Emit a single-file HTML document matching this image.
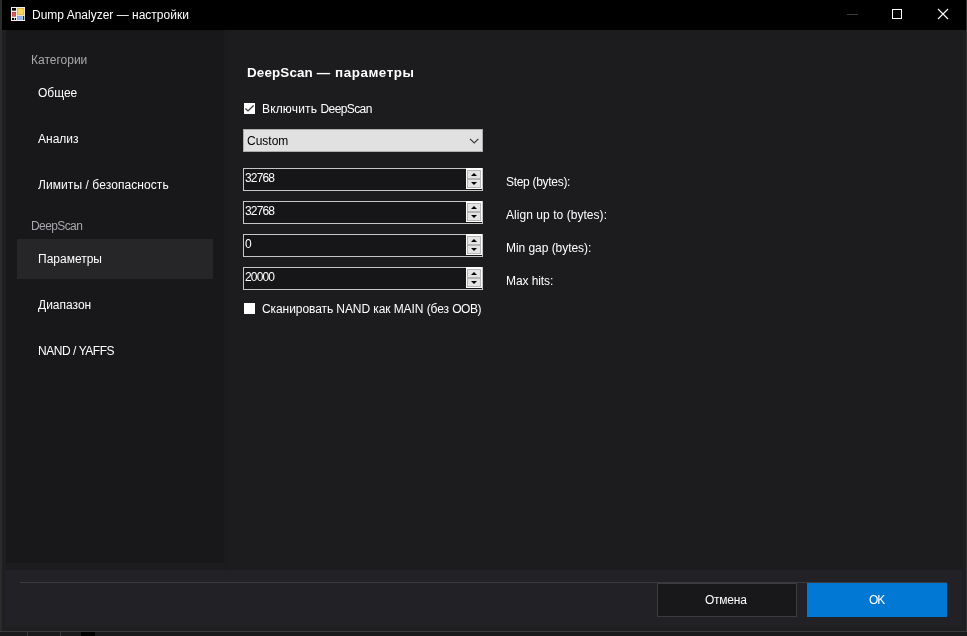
<!DOCTYPE html>
<html lang="ru">
<head>
<meta charset="utf-8">
<title>Dump Analyzer — настройки</title>
<style>
  html, body { margin: 0; padding: 0; }
  body {
    width: 967px; height: 636px; overflow: hidden; position: relative;
    background: #1b1b1d;
    font-family: "Liberation Sans", sans-serif;
    font-size: 12px; color: #ffffff;
  }
  .abs { position: absolute; }
  .t { position: absolute; white-space: nowrap; line-height: 16px; height: 16px; will-change: transform; }
  /* window frame */
  #frame-left { left: 0; top: 0; width: 2px; height: 632px; background: #2b2b2c; }
  #frame-right { left: 966px; top: 0; width: 1px; height: 632px; background: #303030; }
  #titlebar { left: 2px; top: 0; width: 964px; height: 30px; background: #000000; }
  #client { left: 2px; top: 30px; width: 964px; height: 601px; background: #1f1f21; }
  #frame-bottom { left: 0; top: 631px; width: 967px; height: 1px; background: #3a3a3c; }
  #below { left: 0; top: 632px; width: 967px; height: 4px; background: #1a1a1c; }
  #sidebar { left: 6px; top: 30px; width: 218px; height: 533px; background: #18181a; }
  #content { left: 228px; top: 30px; width: 734px; height: 540px; background: #1c1c1e; }
  #gap { left: 224px; top: 30px; width: 4px; height: 540px; background: #1b1b1d; }
  #undersb { left: 6px; top: 563px; width: 218px; height: 7px; background: #1c1c1e; }
  #bottombar { left: 5px; top: 570px; width: 957px; height: 56px; background: #222226; }
  #sep { left: 20px; top: 582px; width: 927px; height: 1px; background: #3a3a3e; }
  .navsel { left: 17px; top: 239px; width: 196px; height: 40px; background: #262629; }
  .hdr { color: #a8a8ac; }
  .btn { position: absolute; top: 583px; width: 140px; height: 34px; box-sizing: border-box; }
  #cancel { left: 657px; background: #18181b; border: 1px solid #3c3c40; }
  #ok { left: 807px; background: #0078d4; }
  .combo { left: 243px; top: 129px; width: 240px; height: 23px; box-sizing: border-box; background: #e1e1e1; border: 1px solid #adadad; }
  .spin { position: absolute; left: 243px; width: 240px; height: 23px; box-sizing: border-box; background: #161618; border: 1px solid #c6c6c6; }
  .spin .ud { position: absolute; right: 0; top: -1px; width: 16px; height: 21px; background: #ffffff; }
  .spin .ud i { position: absolute; left: 1px; width: 14px; height: 9px; box-sizing: border-box; background: #e4e4e4; border: 1px solid #b5b5b5; }
  .spin .ud i.up { top: 2px; }
  .spin .ud i.dn { top: 11px; }
  .spin .ud i:after { content: ""; position: absolute; left: 2.5px; width: 0; height: 0; border-left: 3px solid transparent; border-right: 3px solid transparent; }
  .spin .ud i.up:after { top: 1.5px; border-bottom: 3px solid #000; }
  .spin .ud i.dn:after { top: 2px; border-top: 3px solid #000; }
  .cb { position: absolute; left: 244px; width: 11px; height: 11px; background: #ffffff; }
</style>
</head>
<body>
  <div class="abs" id="client"></div>
  <div class="abs" id="frame-left"></div>
  <div class="abs" id="frame-right"></div>
  <div class="abs" id="titlebar"></div>
  <div class="abs" id="frame-bottom"></div>
  <div class="abs" id="below"></div>
  <div class="abs" style="left:27px;top:632px;width:1px;height:4px;background:#3a3a3c"></div>
  <div class="abs" style="left:60px;top:632px;width:1px;height:4px;background:#3a3a3c"></div>
  <div class="abs" style="left:81px;top:632px;width:14px;height:4px;background:#000"></div>

  <!-- title bar -->
  <svg class="abs" style="left:11px;top:7px" width="14" height="14" viewBox="0 0 14 14">
    <rect x="0" y="0" width="14" height="14" fill="#f2efee"/>
    <rect x="1" y="1" width="4" height="2.6" fill="#000"/>
    <rect x="1" y="5" width="4" height="4.6" fill="#b8403c"/>
    <rect x="1.8" y="5.8" width="2.6" height="3" fill="#e0605c"/>
    <rect x="1" y="11" width="2.2" height="2" fill="#000"/>
    <rect x="4" y="11" width="1" height="2" fill="#000"/>
    <rect x="6" y="1" width="7.2" height="7.2" fill="#d8ae38"/>
    <rect x="6.8" y="1.8" width="5.6" height="5.6" fill="#f6d75c"/>
    <rect x="6" y="9" width="5.6" height="4" fill="#7fa6e6"/>
    <rect x="6.6" y="9.6" width="4.4" height="3" fill="#8fb4f0"/>
    <rect x="12.2" y="9" width="1" height="4" fill="#000"/>
  </svg>
  <div class="t" id="tt" style="left:32px;top:7px;">Dump Analyzer — настройки</div>
  <div class="abs" style="left:847px;top:14px;width:11px;height:1px;background:#3d3d3d"></div>
  <div class="abs" style="left:892px;top:9px;width:10px;height:10px;box-sizing:border-box;border:1px solid #fff"></div>
  <svg class="abs" style="left:937px;top:8px" width="12" height="12" viewBox="0 0 12 12">
    <path d="M1 1 L11 11 M11 1 L1 11" stroke="#fff" stroke-width="1.1" fill="none"/>
  </svg>

  <!-- sidebar -->
  <div class="abs" id="sidebar"></div>
  <div class="abs" id="gap"></div>
  <div class="abs" id="undersb"></div>
  <div class="abs" id="content"></div>
  <div class="abs navsel"></div>
  <div class="t hdr" id="s0" style="left:31px;top:52px;">Категории</div>
  <div class="t" id="s1" style="left:38px;top:85px;">Общее</div>
  <div class="t" id="s2" style="left:38px;top:131px;">Анализ</div>
  <div class="t" id="s3" style="left:38px;top:177px;letter-spacing:0.08px;">Лимиты / безопасность</div>
  <div class="t hdr" id="s4" style="left:31px;top:218px;letter-spacing:-0.6px;">DeepScan</div>
  <div class="t" id="s5" style="left:38px;top:251px;">Параметры</div>
  <div class="t" id="s6" style="left:38px;top:297px;">Диапазон</div>
  <div class="t" id="s7" style="left:38px;top:343px;letter-spacing:-0.45px;">NAND / YAFFS</div>

  <!-- content -->
  <div class="t" id="h1" style="left:247px;top:65px;font-size:13.4px;font-weight:bold;"><span style="letter-spacing:0.15px">DeepScan </span><span style="letter-spacing:0.55px">— параметры</span></div>

  <div class="cb" style="top:103px">
    <svg width="11" height="11" viewBox="0 0 11 11" style="display:block"><path d="M1.4 5.5 L4 7.9 L9.6 2.4" stroke="#3c3c3c" stroke-width="1.4" fill="none"/></svg>
  </div>
  <div class="t" id="c1" style="left:262px;top:101px;"><span style="letter-spacing:0.15px">Включить </span><span style="letter-spacing:-0.6px">DeepScan</span></div>

  <div class="abs combo"></div>
  <div class="t" id="cm" style="left:247px;top:132.6px;color:#000;">Custom</div>
  <svg class="abs" style="left:469px;top:137px" width="11" height="8" viewBox="0 0 11 8"><path d="M1 1.8 L5.2 6 L9.4 1.8" stroke="#3a3a3a" stroke-width="1.2" fill="none"/></svg>

  <div class="spin" style="top:168px"><div class="ud"><i class="up"></i><i class="dn"></i></div></div>
  <div class="spin" style="top:201px"><div class="ud"><i class="up"></i><i class="dn"></i></div></div>
  <div class="spin" style="top:234px"><div class="ud"><i class="up"></i><i class="dn"></i></div></div>
  <div class="spin" style="top:267px"><div class="ud"><i class="up"></i><i class="dn"></i></div></div>
  <div class="t" id="n1" style="left:245px;top:170px;letter-spacing:-0.85px;">32768</div>
  <div class="t" id="n2" style="left:245px;top:203px;letter-spacing:-0.85px;">32768</div>
  <div class="t" id="n3" style="left:245px;top:236px;letter-spacing:-0.85px;">0</div>
  <div class="t" id="n4" style="left:245px;top:269px;letter-spacing:-0.85px;">20000</div>

  <div class="t" id="l1" style="left:506px;top:174px;letter-spacing:-0.3px;">Step (bytes):</div>
  <div class="t" id="l2" style="left:506px;top:207px;letter-spacing:0.05px;">Align up to (bytes):</div>
  <div class="t" id="l3" style="left:506px;top:240px;letter-spacing:-0.05px;">Min gap (bytes):</div>
  <div class="t" id="l4" style="left:506px;top:273px;letter-spacing:-0.08px;">Max hits:</div>

  <div class="cb" style="top:303px"></div>
  <div class="t" id="c2" style="left:262px;top:301px;letter-spacing:-0.08px;">Сканировать NAND как MAIN (без <span style="letter-spacing:-0.45px">OOB)</span></div>

  <!-- bottom bar -->
  <div class="abs" id="bottombar"></div>
  <div class="abs" id="sep"></div>
  <div class="btn" id="cancel"></div>
  <div class="btn" id="ok"></div>
  <div class="t" id="b1" style="left:705px;top:592px;letter-spacing:-0.25px;">Отмена</div>
  <div class="t" id="b2" style="left:868.5px;top:592px;letter-spacing:-1px;">OK</div>
</body>
</html>
